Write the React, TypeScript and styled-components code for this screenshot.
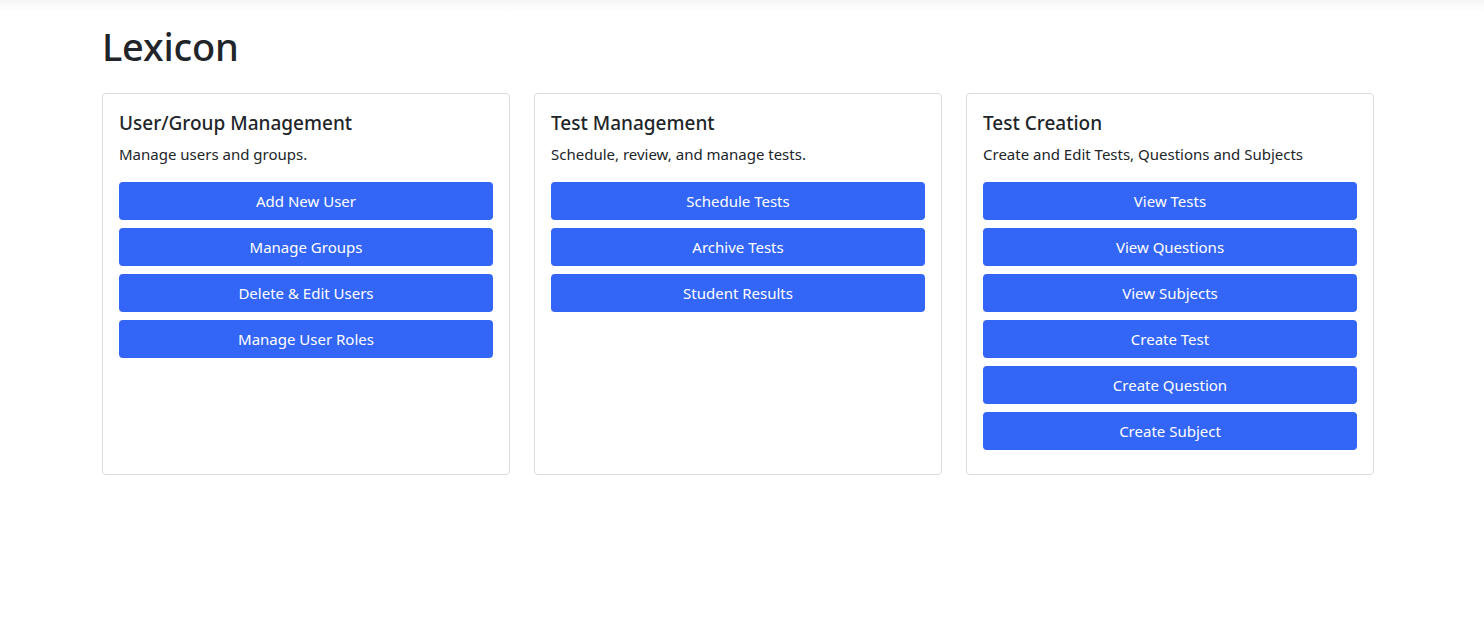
import React from "react";
import styled, { createGlobalStyle } from "styled-components";

const Global = createGlobalStyle`
  html, body { margin: 0; padding: 0; background: #fff; }
  body {
    font-family: "Noto Sans", "Open Sans", Roboto, sans-serif;
    color: #212529;
    font-size: 16px;
    line-height: 1.5;
  }
  * { box-sizing: border-box; }
`;

const TopShade = styled.div`
  height: 12px;
  background: linear-gradient(to bottom, #f4f4f4 0%, #fbfbfb 50%, #ffffff 100%);
`;

const Container = styled.main`
  width: 1272px;
  margin-left: 102px;
  padding-top: 10px;
`;

const Title = styled.h1`
  margin: 0 0 23px 0;
  font-size: 38px;
  font-weight: 500;
  line-height: 48px;
  letter-spacing: -0.2px;
`;

const Grid = styled.div`
  display: grid;
  grid-template-columns: repeat(3, 408px);
  column-gap: 24px;
`;

const Card = styled.section`
  border: 1px solid #dcdcdc;
  border-radius: 4px;
  padding: 16px;
  display: flex;
  flex-direction: column;
`;

const CardTitle = styled.h5`
  margin: 0 0 8px 0;
  padding-top: 1px;
  height: 24px;
  font-size: 19px;
  font-weight: 500;
  line-height: 24px;
`;

const CardText = styled.p`
  margin: 0 0 16px 0;
  font-size: 15px;
  line-height: 24px;
`;

const Button = styled.button`
  display: block;
  width: 100%;
  height: 38px;
  margin: 0 0 8px 0;
  border: none;
  border-radius: 4px;
  background: #3366f7;
  color: #fff;
  font-family: inherit;
  font-size: 15px;
  line-height: 24px;
  padding: 6px 12px;
  cursor: pointer;
`;

const cards = [
  {
    title: "User/Group Management",
    text: "Manage users and groups.",
    buttons: ["Add New User", "Manage Groups", "Delete & Edit Users", "Manage User Roles"],
  },
  {
    title: "Test Management",
    text: "Schedule, review, and manage tests.",
    buttons: ["Schedule Tests", "Archive Tests", "Student Results"],
  },
  {
    title: "Test Creation",
    text: "Create and Edit Tests, Questions and Subjects",
    buttons: ["View Tests", "View Questions", "View Subjects", "Create Test", "Create Question", "Create Subject"],
  },
];

export default function App() {
  return (
    <>
      <Global />
      <TopShade />
      <Container>
        <Title>Lexicon</Title>
        <Grid>
          {cards.map((c) => (
            <Card key={c.title}>
              <CardTitle>{c.title}</CardTitle>
              <CardText>{c.text}</CardText>
              {c.buttons.map((b) => (
                <Button key={b}>{b}</Button>
              ))}
            </Card>
          ))}
        </Grid>
      </Container>
    </>
  );
}
